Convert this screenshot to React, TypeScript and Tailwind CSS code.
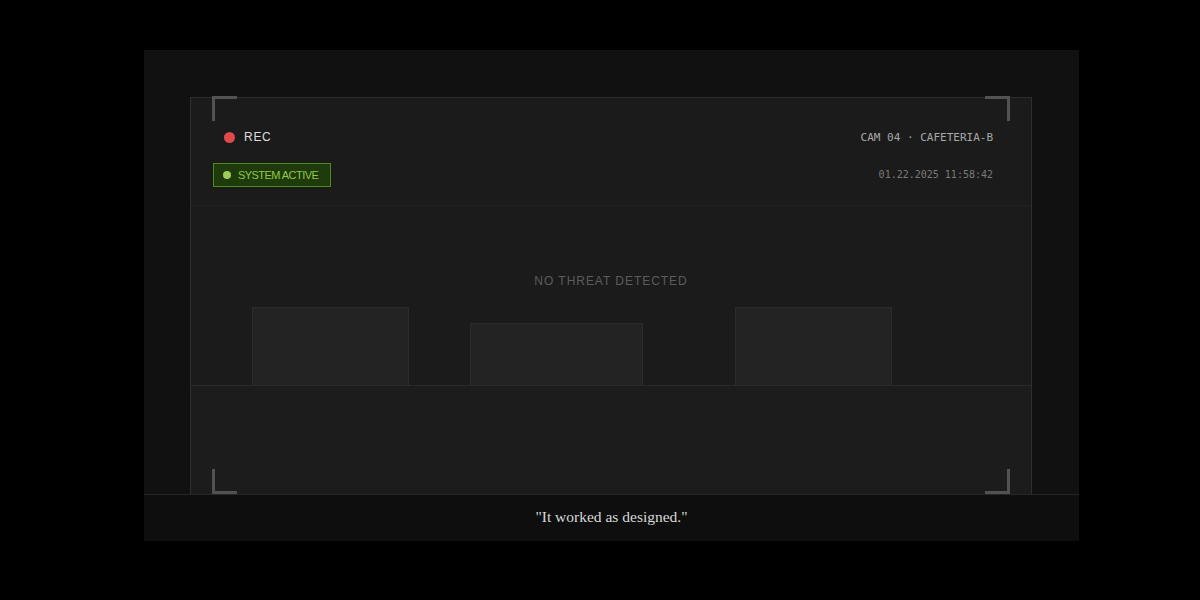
import React from "react";

const Bracket = ({ className }: { className: string }) => (
  <div className={`absolute w-[25px] h-[25px] border-[#525252] ${className}`} />
);

const Table = ({ className }: { className: string }) => (
  <div className={`bg-[#232323] border border-b-0 border-[#2c2c2c] ${className}`} />
);

const App = () => {
  return (
    <div className="w-[1200px] h-[600px] bg-black pl-[144px] pt-[50px] font-['Liberation_Sans',Arial,sans-serif]">
      <div className="relative w-[935px] h-[491px] bg-[#111111] flex flex-col">
        <div className="pl-[46px] pr-[47px] pt-[47px] flex-1 flex flex-col">
          <div className="flex-1 bg-[#1b1b1b] border border-b-0 border-[#2e2e2e] flex flex-col">
            {/* header */}
            <div className="flex justify-between pl-[22px] pr-[38px] pt-[28px] pb-[18px] border-b border-[#222222]">
              <div className="flex flex-col">
                <div className="h-5 mt-[1px] ml-[11px] flex items-center gap-[9px]">
                  <span className="w-[11px] h-[11px] rounded-full bg-[#e04a4a]" />
                  <span className="text-[12px] text-[#dddddd] tracking-[0.06em]">REC</span>
                </div>
                <div className="mt-[16px] h-6 w-[118px] flex items-center gap-[7px] pl-[9px] bg-[#1f3a0b] border border-[#4b8b1b]">
                  <span className="w-2 h-2 rounded-full bg-[#9ccc5a]" />
                  <span className="text-[11px] text-[#8fc84a] tracking-[-0.05em]">SYSTEM ACTIVE</span>
                </div>
              </div>
              <div className="flex flex-col items-end font-['DejaVu_Sans_Mono',monospace]">
                <div className="h-5 mt-[2px] flex items-center text-[11px] text-[#a8a8a8]">CAM 04 · CAFETERIA-B</div>
                <div className="mt-[14px] h-6 flex items-center text-[10px] text-[#7a7a7a]">01.22.2025 11:58:42</div>
              </div>
            </div>

            {/* scene */}
            <div className="h-[180px] flex flex-col border-b border-[#2a2a2a]">
              <div className="pt-[67px] text-center text-[12px] leading-4 tracking-[0.08em] text-[#5c5c5c]">
                NO THREAT DETECTED
              </div>
              <div className="mt-auto flex items-end">
                <Table className="ml-[61px] w-[157px] h-[78px]" />
                <Table className="ml-[61px] w-[173px] h-[62px]" />
                <Table className="ml-[92px] w-[157px] h-[78px]" />
              </div>
            </div>
            <div className="flex-1 bg-[#1c1c1c]" />
          </div>
        </div>

        {/* caption */}
        <div className="h-[47px] pb-[2px] bg-[#0e0e0e] border-t border-[#262626] flex items-center justify-center">
          <span className="font-['Liberation_Serif','Times_New_Roman',serif] text-[15.5px] text-[#d8d8d8]">
            "It worked as designed."
          </span>
        </div>

        <Bracket className="left-[68px] top-[46px] border-t-[3px] border-l-[3px]" />
        <Bracket className="right-[69px] top-[46px] border-t-[3px] border-r-[3px]" />
        <Bracket className="left-[68px] bottom-[47px] border-b-[3px] border-l-[3px]" />
        <Bracket className="right-[69px] bottom-[47px] border-b-[3px] border-r-[3px]" />
      </div>
    </div>
  );
};

export default App;
